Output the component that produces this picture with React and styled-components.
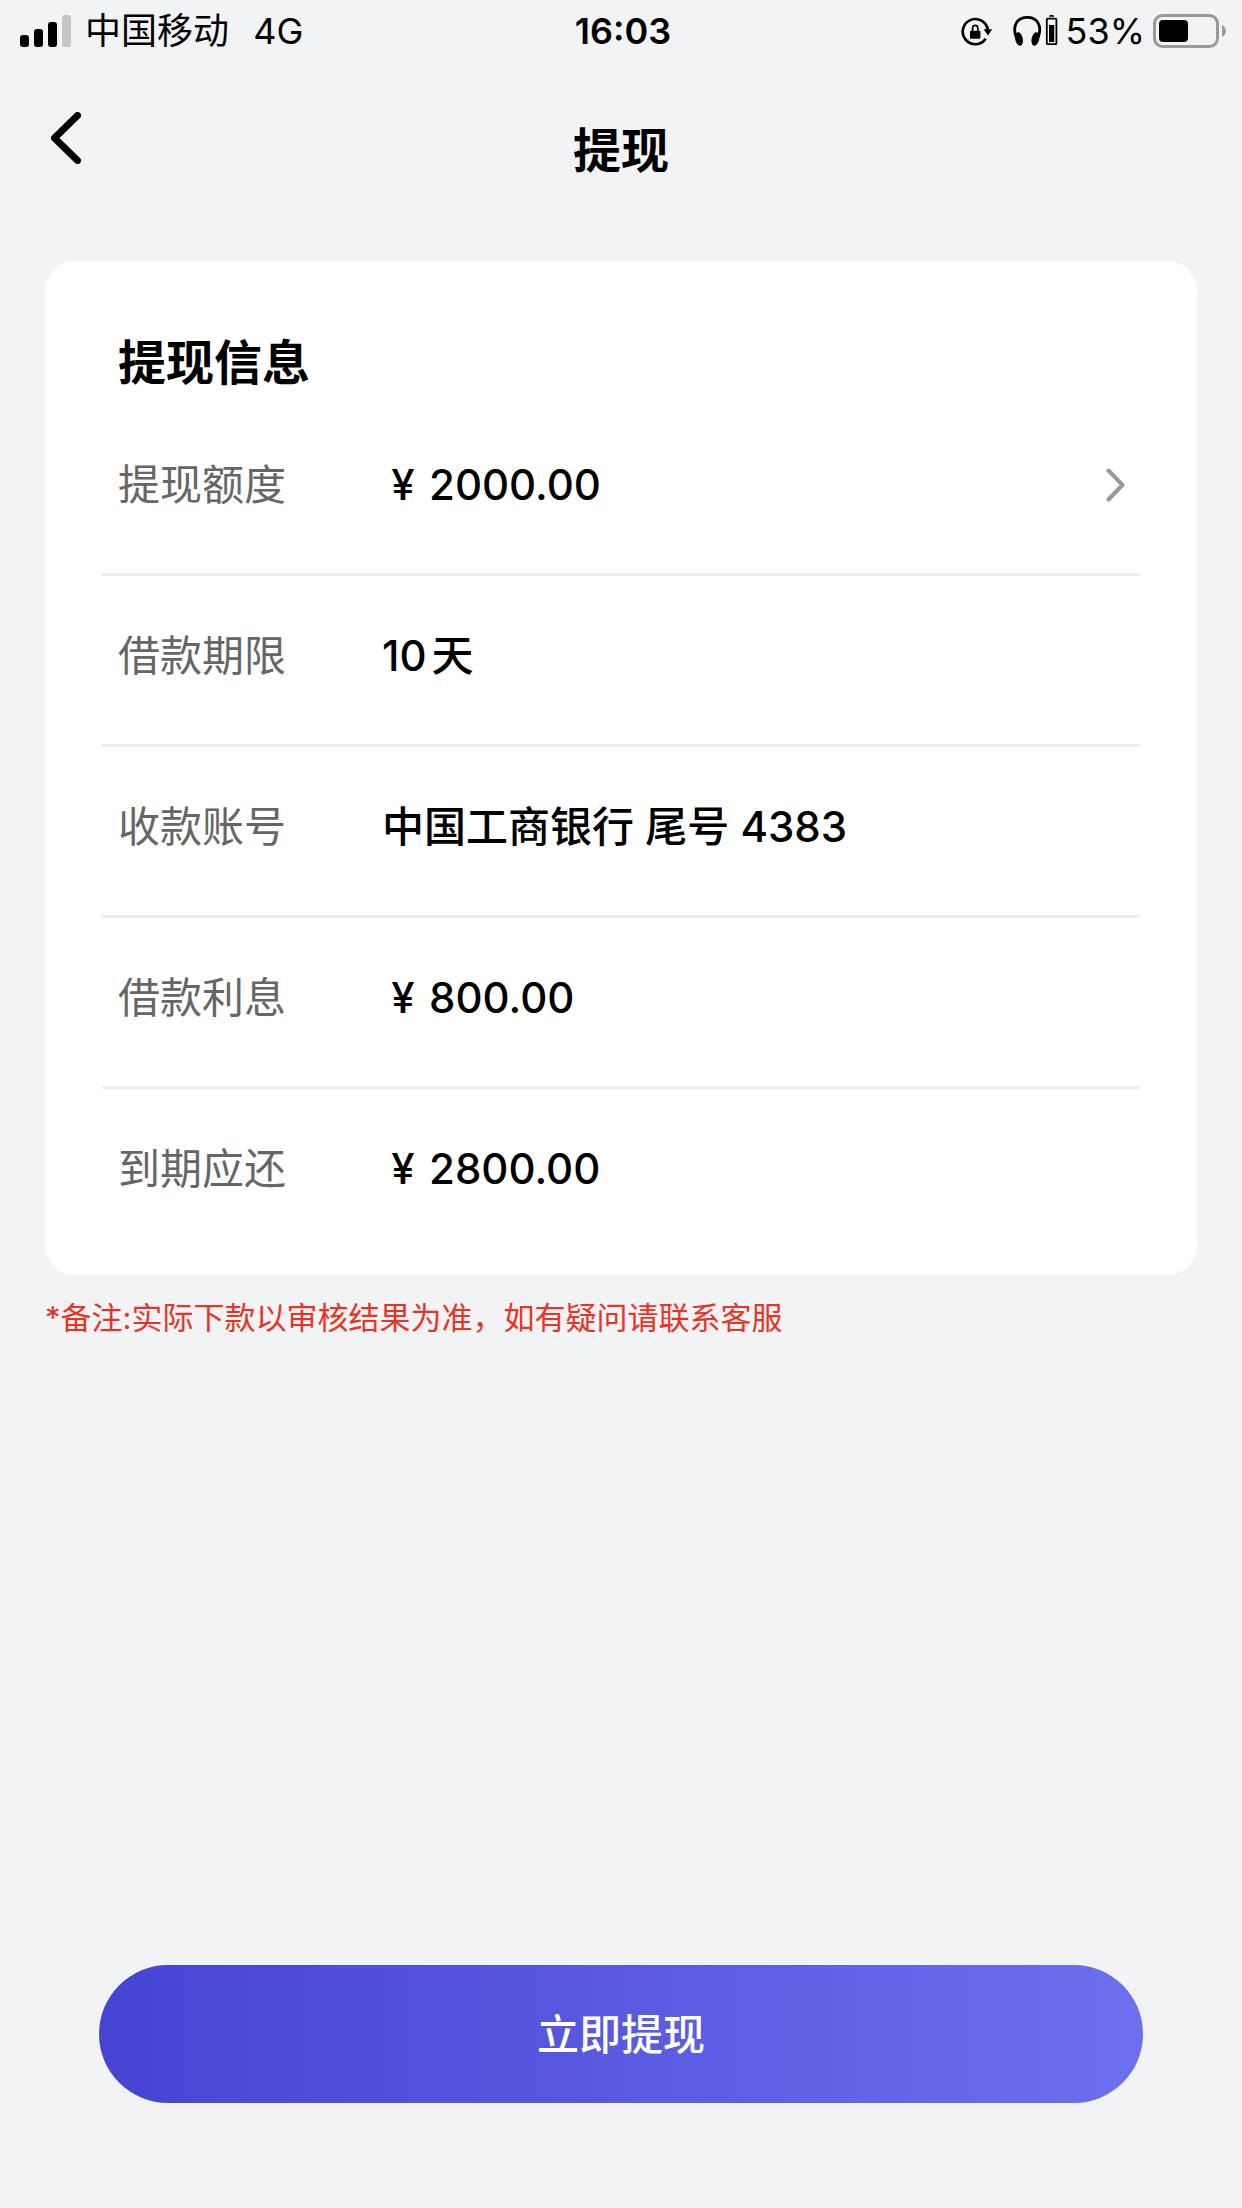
import React from "react";
import styled, { createGlobalStyle } from "styled-components";

const GlobalStyle = createGlobalStyle`
  * {
    box-sizing: border-box;
  }

  body {
    margin: 0;
    background: #f2f3f5;
    color: #000;
    font-family: Inter, "Noto Sans CJK SC", sans-serif;
  }

  button {
    font-family: inherit;
    border: none;
    padding: 0;
    background: none;
    cursor: pointer;
  }
`;

const Screen = styled.div`
  min-height: 100vh;
  display: flex;
  flex-direction: column;
`;

const StatusBar = styled.div`
  height: 62px;
  padding: 0 16px 0 20px;
  display: grid;
  grid-template-columns: 1fr auto 1fr;
  align-items: center;
  font-size: 36px;
  line-height: 40px;
`;

const StatusGroup = styled.div`
  display: flex;
  align-items: center;
  justify-content: ${(props) => (props.$end ? "flex-end" : "flex-start")};
  gap: ${(props) => props.$gap};
`;

const Clock = styled.time`
  font-weight: 600;
`;

const Header = styled.header`
  height: 178px;
  padding: 0 51px;
  display: grid;
  grid-template-columns: 1fr auto 1fr;
  align-items: center;
`;

const BackButton = styled.button`
  justify-self: start;
  align-self: start;
  margin-top: 50px;
  display: flex;
`;

const PageTitle = styled.h1`
  margin: 0;
  font-size: 48px;
  line-height: 56px;
  font-weight: 700;
`;

const Main = styled.main`
  flex: 1;
  padding: 21px 45px 0;
`;

const Card = styled.section`
  padding: 74px 57px 15px;
  border-radius: 30px;
  background: #fff;
`;

const CardTitle = styled.h2`
  margin: 0;
  padding: 0 16px;
  font-size: 48px;
  line-height: 56px;
  font-weight: 700;
`;

const InfoList = styled.dl`
  margin: 14px 0 0;
`;

const InfoRow = styled.div`
  height: 171px;
  padding: 0 14px 8px 16px;
  display: flex;
  align-items: center;
  font-size: 42px;
  line-height: 48px;
  border-bottom: 3px solid #eee;

  &:last-child {
    border-bottom-color: transparent;
  }
`;

const Label = styled.dt`
  width: 264px;
  color: #666;
`;

const Value = styled.dd`
  margin: 0;
  flex: 1;
  display: flex;
  align-items: center;
  gap: 5px;
  font-weight: 500;
`;

const Currency = styled.span`
  width: 42px;
  text-align: center;
`;

const MoreButton = styled.button`
  margin-left: auto;
  display: flex;
`;

const Note = styled.p`
  margin: 23px 0 0;
  font-size: 31px;
  line-height: 40px;
  color: #ea3323;
`;

const Footer = styled.footer`
  padding: 0 99px 105px;
`;

const SubmitButton = styled.button`
  width: 100%;
  height: 138px;
  padding-bottom: 6px;
  border-radius: 69px;
  background: linear-gradient(90deg, #4644d3, #6b70ee);
  color: #fff;
  font-size: 42px;
  font-weight: 500;
`;

const SignalIcon = () => (
  <svg width='51' height='32' viewBox='0 0 51 32' aria-hidden='true'>
    <rect x='0' y='20' width='9' height='12' rx='3' />
    <rect x='14' y='14' width='9' height='18' rx='3' />
    <rect x='28' y='7' width='9' height='25' rx='3' />
    <rect x='42' y='0' width='9' height='32' rx='3' fill='#c4c5c7' />
  </svg>
);

const RotationLockIcon = () => (
  <svg width='32' height='32' viewBox='0 0 32 32' aria-hidden='true'>
    <path
      d='M24.7 23.8A12.6 12.6 0 1 1 26.8 15'
      fill='none'
      stroke='#000'
      strokeWidth='2.7'
    />
    <path d='M22.6 14.2H31.2L27 20.6Z' />
    <rect x='9' y='15.7' width='10.4' height='8' rx='1' />
    <path
      d='M11.6 16v-2.8a2.6 2.8 0 0 1 5.2 0V16'
      fill='none'
      stroke='#000'
      strokeWidth='1.7'
    />
  </svg>
);

const HeadphonesIcon = () => (
  <svg width='45' height='32' viewBox='0 0 45 32' aria-hidden='true'>
    <path
      d='M3 22C-1 10 4.5 2.4 14.2 2.4S29.4 10 25.4 22'
      fill='none'
      stroke='#000'
      strokeWidth='2.8'
    />
    <ellipse cx='6' cy='24' rx='3.8' ry='6.8' transform='rotate(-12 6 24)' />
    <ellipse cx='22.4' cy='24' rx='3.8' ry='6.8' transform='rotate(12 22.4 24)' />
    <rect x='33.8' y='3.6' width='9.6' height='25.6' rx='1' fill='none' stroke='#000' strokeWidth='1.8' />
    <path d='M36 1.8a2.6 2 0 0 1 5.2 0Z' />
    <rect x='36' y='10' width='5.2' height='17' />
  </svg>
);

const BatteryIcon = () => (
  <svg width='73' height='34' viewBox='0 0 73 34' aria-hidden='true'>
    <rect x='1.5' y='1.5' width='63' height='31' rx='8' fill='none' stroke='#98999b' strokeWidth='3' />
    <rect x='6' y='6' width='29' height='22' rx='4' />
    <path d='M69 11c5 2 5 10 0 12Z' fill='#98999b' />
  </svg>
);

const BackIcon = () => (
  <svg width='30' height='52' viewBox='0 0 30 52' aria-hidden='true'>
    <path
      d='M26.5 3.5 3.5 26 26.5 48.5'
      fill='none'
      stroke='#000'
      strokeWidth='7'
      strokeLinecap='round'
      strokeLinejoin='round'
    />
  </svg>
);

const ChevronIcon = () => (
  <svg width='20' height='34' viewBox='0 0 20 34' aria-hidden='true'>
    <path
      d='M2.5 2.5 16.5 17 2.5 31.5'
      fill='none'
      stroke='#999'
      strokeWidth='4'
      strokeLinecap='round'
      strokeLinejoin='round'
    />
  </svg>
);

const rows = [
  { label: "提现额度", amount: "2000.00", more: true },
  { label: "借款期限", text: "10", unit: "天" },
  { label: "收款账号", text: "中国工商银行 尾号 4383" },
  { label: "借款利息", amount: "800.00" },
  { label: "到期应还", amount: "2800.00" },
];

const App = () => {
  return (
    <Screen>
      <GlobalStyle />
      <StatusBar>
        <StatusGroup $gap='14px'>
          <SignalIcon />
          <span>中国移动</span>
          <span>&nbsp;4G</span>
        </StatusGroup>
        <Clock>16:03</Clock>
        <StatusGroup $end $gap='20px'>
          <RotationLockIcon />
          <StatusGroup $end $gap='8px'>
            <HeadphonesIcon />
            <span>53%</span>
            <BatteryIcon />
          </StatusGroup>
        </StatusGroup>
      </StatusBar>
      <Header>
        <BackButton type='button' aria-label='返回'>
          <BackIcon />
        </BackButton>
        <PageTitle>提现</PageTitle>
      </Header>
      <Main>
        <Card>
          <CardTitle>提现信息</CardTitle>
          <InfoList>
            {rows.map((row) => (
              <InfoRow key={row.label}>
                <Label>{row.label}</Label>
                <Value>
                  {row.amount && <Currency>¥</Currency>}
                  <span>{row.amount || row.text}</span>
                  {row.unit && <span>{row.unit}</span>}
                  {row.more && (
                    <MoreButton type='button' aria-label='选择额度'>
                      <ChevronIcon />
                    </MoreButton>
                  )}
                </Value>
              </InfoRow>
            ))}
          </InfoList>
        </Card>
        <Note>*备注:实际下款以审核结果为准，如有疑问请联系客服</Note>
      </Main>
      <Footer>
        <SubmitButton type='button'>立即提现</SubmitButton>
      </Footer>
    </Screen>
  );
};

export default App;
